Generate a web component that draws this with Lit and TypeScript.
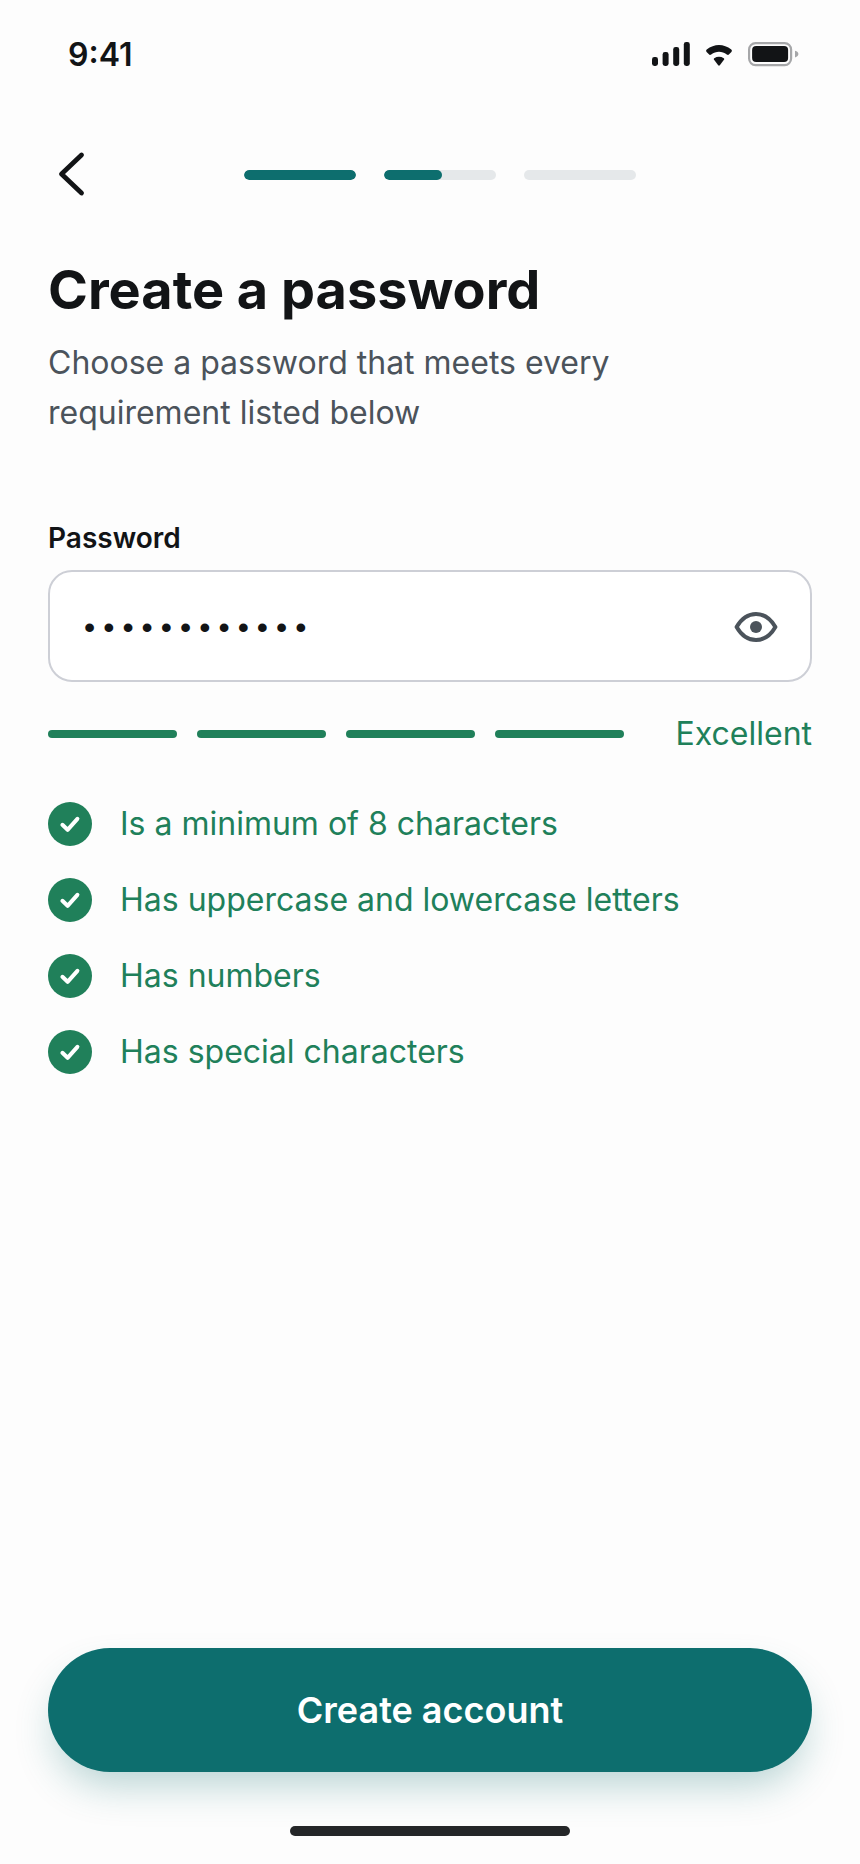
import { LitElement, html, css, svg } from "lit";
import { customElement, state } from "lit/decorators.js";
import { styleMap } from "lit/directives/style-map.js";

@customElement("status-bar")
export class StatusBar extends LitElement {
  static styles = css`
    :host {
      display: flex;
      align-items: center;
      justify-content: space-between;
      box-sizing: border-box;
      height: 108px;
      padding: 2px 60px 0 68px;
      color: #121416;
    }
    .time {
      font-size: 32px;
      line-height: 40px;
      font-weight: 600;
    }
    .icons {
      display: block;
    }
  `;

  render() {
    return html`
      <span class="time">9:41</span>
      <svg class="icons" width="148" height="26" viewBox="0 1 148 26" fill="currentColor" aria-hidden="true">
        <rect x="0" y="16" width="6" height="9" rx="2.4" />
        <rect x="10.6" y="11" width="6" height="14" rx="2.4" />
        <rect x="21.2" y="6" width="6" height="19" rx="2.4" />
        <rect x="31.8" y="1" width="6" height="24" rx="2.4" />
        <path d="M54.6 10.9 Q53.4 9.7 54.7 8.6 C62.2 2.5 71.8 2.5 79.3 8.6 Q80.6 9.7 79.4 10.9 L77.1 13.3 Q76.1 14.4 74.8 13.4 C70 9.9 64 9.9 59.2 13.4 Q57.9 14.4 56.9 13.3 Z" />
        <path d="M61.9 18.6 Q61.3 17.8 62.2 17.2 C65.2 15.4 68.8 15.4 71.8 17.2 Q72.7 17.8 72.1 18.6 L67.8 24.3 Q67 25.2 66.2 24.3 Z" />
        <rect x="97.1" y="2.1" width="42" height="22" rx="6.5" fill="none" stroke="#a6a7a9" stroke-width="2.2" />
        <rect x="100.1" y="5.1" width="36" height="16" rx="4" />
        <path d="M143 9.8 Q146.4 10.8 146.4 13.1 Q146.4 15.4 143 16.4 Z" fill="#a6a7a9" />
      </svg>
    `;
  }
}

@customElement("step-progress")
export class StepProgress extends LitElement {
  @state() private steps = [100, 52, 0];

  static styles = css`
    :host {
      display: flex;
      gap: 28px;
    }
    .step {
      width: 112px;
      height: 10px;
      border-radius: 5px;
      background: #e5e8ea;
      overflow: hidden;
    }
    .fill {
      height: 100%;
      border-radius: 5px;
      background: #0d6e6e;
    }
  `;

  render() {
    return this.steps.map(
      (value) => html`<div class="step"><div class="fill" style=${styleMap({ width: `${value}%` })}></div></div>`
    );
  }
}

const checkIcon = svg`<path d="M14.4 22.8 L19.6 27.8 L29.4 16.8" fill="none" stroke="#fff" stroke-width="4" stroke-linecap="round" stroke-linejoin="round" />`;

@customElement("app-root")
export class AppRoot extends LitElement {
  @state() private password = "Abcdef12345!";
  @state() private visible = false;

  private rules = [
    "Is a minimum of 8 characters",
    "Has uppercase and lowercase letters",
    "Has numbers",
    "Has special characters",
  ];

  static styles = css`
    :host {
      display: flex;
      flex-direction: column;
      box-sizing: border-box;
      min-height: 100vh;
      background: #fdfdfd;
      color: #121416;
      font-family: Inter, "Liberation Sans", sans-serif;
    }
    button {
      border: 0;
      padding: 0;
      margin: 0;
      background: none;
      font-family: inherit;
      color: inherit;
      cursor: pointer;
    }
    svg {
      display: block;
    }
    .header {
      display: flex;
      align-items: center;
      height: 134px;
      padding: 0 76px 0 48px;
    }
    .back {
      width: 48px;
      height: 48px;
    }
    .steps {
      flex: 1;
      display: flex;
      justify-content: center;
    }
    .content {
      flex: 1;
      display: flex;
      flex-direction: column;
      padding: 14px 48px 0;
    }
    .title {
      margin: 0;
      font-size: 54px;
      line-height: 68px;
      font-weight: 700;
    }
    .subtitle {
      margin: 14px 0 0;
      max-width: 600px;
      font-size: 32px;
      line-height: 50px;
      color: #4b535b;
    }
    .label {
      margin-top: 82px;
      font-size: 28px;
      line-height: 36px;
      font-weight: 600;
    }
    .field {
      display: flex;
      align-items: center;
      box-sizing: border-box;
      height: 112px;
      margin-top: 14px;
      padding: 0 32px 0 30px;
      border: 2px solid #cdcfd6;
      border-radius: 24px;
      background: #fff;
    }
    .input {
      flex: 1;
      min-width: 0;
      border: 0;
      padding: 8px 0 0;
      outline: 0;
      background: none;
      color: inherit;
      font-family: "Liberation Mono", monospace;
      font-size: 32px;
      line-height: 40px;
    }
    .eye {
      width: 44px;
      height: 44px;
      color: #4b535b;
    }
    .strength {
      display: flex;
      align-items: center;
      gap: 52px;
      margin-top: 32px;
      color: #20805a;
      font-size: 32px;
      line-height: 40px;
    }
    .bars {
      flex: 1;
      display: flex;
      gap: 20px;
    }
    .bar {
      flex: 1;
      height: 8px;
      border-radius: 4px;
      background: #20805a;
    }
    .rules {
      display: flex;
      flex-direction: column;
      gap: 32px;
      margin: 48px 0 0;
      padding: 0;
      list-style: none;
      color: #20805a;
      font-size: 32px;
      line-height: 44px;
    }
    .rule {
      display: flex;
      align-items: center;
      gap: 28px;
    }
    .footer {
      display: flex;
      flex-direction: column;
      align-items: center;
      padding: 0 48px 28px;
    }
    .submit {
      width: 100%;
      height: 124px;
      border-radius: 62px;
      background: #0d6e6e;
      color: #fff;
      font-size: 36px;
      line-height: 44px;
      font-weight: 600;
      box-shadow: 0 20px 40px -8px rgba(13, 110, 110, 0.3);
    }
    .home {
      width: 280px;
      height: 10px;
      margin-top: 54px;
      border-radius: 5px;
      background: #242628;
      z-index: 1;
    }
  `;

  render() {
    return html`
      <status-bar></status-bar>
      <header class="header">
        <button class="back" type="button" aria-label="Back">
          <svg width="48" height="48" viewBox="0 0 48 48" fill="none" stroke="currentColor" stroke-width="4.8" stroke-linecap="round" stroke-linejoin="round">
            <path d="M33.5 4 L13.5 23 L33.5 42" />
          </svg>
        </button>
        <div class="steps"><step-progress></step-progress></div>
      </header>
      <main class="content">
        <h1 class="title">Create a password</h1>
        <p class="subtitle">Choose a password that meets every requirement listed below</p>
        <label class="label" for="password">Password</label>
        <div class="field">
          <input
            class="input"
            id="password"
            type=${this.visible ? "text" : "password"}
            .value=${this.password}
            @input=${(e: Event) => (this.password = (e.target as HTMLInputElement).value)}
          />
          <button class="eye" type="button" aria-label="Show password" @click=${() => (this.visible = !this.visible)}>
            <svg width="44" height="44" viewBox="0 0 44 44">
              <path d="M2.6 23 C12.6 5.6 31.4 5.6 41.4 23 C31.4 40.4 12.6 40.4 2.6 23 Z" fill="none" stroke="currentColor" stroke-width="4" stroke-linejoin="round" />
              <circle cx="22" cy="23" r="6" fill="currentColor" />
            </svg>
          </button>
        </div>
        <div class="strength">
          <div class="bars">
            <div class="bar"></div>
            <div class="bar"></div>
            <div class="bar"></div>
            <div class="bar"></div>
          </div>
          <span>Excellent</span>
        </div>
        <ul class="rules">
          ${this.rules.map(
            (rule) => html`
              <li class="rule">
                <svg width="44" height="44" viewBox="0 0 44 44" aria-hidden="true">
                  <circle cx="22" cy="22" r="22" fill="currentColor" />
                  ${checkIcon}
                </svg>
                <span>${rule}</span>
              </li>
            `
          )}
        </ul>
      </main>
      <footer class="footer">
        <button class="submit" type="button">Create account</button>
        <div class="home"></div>
      </footer>
    `;
  }
}
